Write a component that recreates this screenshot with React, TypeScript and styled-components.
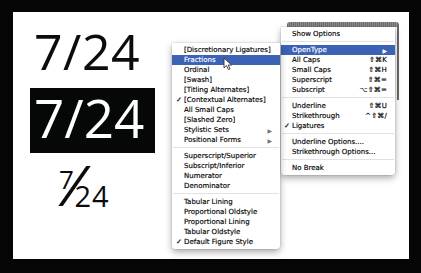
import styled, { createGlobalStyle } from "styled-components";

interface MenuEntry {
  label?: string;
  shortcut?: string;
  checked?: boolean;
  submenu?: boolean;
  active?: boolean;
  separator?: boolean;
}

const GlobalStyle = createGlobalStyle`
  html, body {
    margin: 0;
    padding: 0;
    background: #000;
  }
`;

const Frame = styled.div`
  width: 421px;
  height: 273px;
  box-sizing: border-box;
  padding: 12px 12px 14px 13px;
  background: #050505;
`;

const Canvas = styled.div`
  position: relative;
  width: 100%;
  height: 100%;
  background: #fff;
  overflow: hidden;
`;

const Figures = styled.div`
  display: flex;
  flex-direction: column;
  align-items: flex-start;
  padding: 14px 0 0 17px;
  font-family: "Open Sans", "DejaVu Sans", sans-serif;
  color: #0c0c0c;
`;

const PlainFigure = styled.div`
  font-size: 50px;
  line-height: 50px;
  margin-left: 4px;
  letter-spacing: 0.5px;
`;

const InvertedFigure = styled.div`
  margin-top: 12px;
  width: 125px;
  height: 65px;
  box-sizing: border-box;
  padding: 3px 0 0 4px;
  background: #060808;
  color: #fff;
  font-size: 53px;
  line-height: 53px;
`;

const StackedFraction = styled.div`
  display: flex;
  align-items: flex-start;
  height: 52px;
  margin: 13px 0 0 29px;
`;

const Numerator = styled.span`
  font-size: 26px;
  line-height: 26px;
`;

const FractionSlash = styled.span`
  font-size: 56px;
  line-height: 48px;
  font-weight: 500;
  margin: -6px -11px 0 -9px;
  transform: skewX(-18deg);
`;

const Denominator = styled.span`
  font-size: 29px;
  line-height: 29px;
  letter-spacing: 1px;
  margin-top: 15px;
`;

const BackPanel = styled.div`
  position: absolute;
  left: 274px;
  top: 10px;
  width: 110px;
  height: 78px;
  border-radius: 3px 3px 0 0;
  border-right: 2px solid #6a6a6a;
  background: #fafafa;
  overflow: hidden;
`;

const PanelBar = styled.div`
  height: 5px;
  background: repeating-linear-gradient(90deg, #707070 0 1px, #8c8c8c 1px 2px);
`;

const GhostText = styled.div`
  padding: 40px 0 0 56px;
  font-family: "DejaVu Sans", sans-serif;
  font-size: 7px;
  line-height: 8px;
  color: #e6e6e6;
`;

const Menu = styled.div<{ $left: number; $top: number; $width: number }>`
  position: absolute;
  left: ${({ $left }) => $left}px;
  top: ${({ $top }) => $top}px;
  width: ${({ $width }) => $width}px;
  padding: 2px 0 2px;
  background: rgba(255, 255, 255, 0.96);
  border-radius: 0 0 4px 4px;
  box-shadow: 0 3px 7px rgba(0, 0, 0, 0.35), 0 0 0 0.5px rgba(0, 0, 0, 0.12);
  font-family: "DejaVu Sans", sans-serif;
  font-size: 7px;
  color: #000;
  -webkit-text-stroke: 0.15px #000;
`;

const Row = styled.div<{ $active?: boolean; $indent: number }>`
  position: relative;
  display: flex;
  align-items: center;
  height: 10px;
  padding: 0 8px 0 ${({ $indent }) => $indent}px;
  background: ${({ $active }) => ($active ? "#3c62b6" : "transparent")};
  color: ${({ $active }) => ($active ? "#fff" : "inherit")};
  -webkit-text-stroke-color: ${({ $active }) => ($active ? "#fff" : "#000")};
  white-space: nowrap;
`;

const Check = styled.span<{ $indent: number }>`
  position: absolute;
  left: ${({ $indent }) => $indent - 8}px;
  font-size: 7px;
`;

const Label = styled.span`
  flex: 1;
`;

const Shortcut = styled.span`
  letter-spacing: 0.2px;
`;

const Arrow = styled.span<{ $active?: boolean }>`
  font-size: 6px;
  color: ${({ $active }) => ($active ? "#fff" : "#777")};
  -webkit-text-stroke: 0;
`;

const Separator = styled.div`
  height: 1px;
  margin: 2px 1px 3px;
  background: #e2e2e2;
`;

const Cursor = styled.svg`
  position: absolute;
  left: 210px;
  top: 45px;
`;

const leftItems: MenuEntry[] = [
  { label: "[Discretionary Ligatures]" },
  { label: "Fractions", active: true },
  { label: "Ordinal" },
  { label: "[Swash]" },
  { label: "[Titling Alternates]" },
  { label: "[Contextual Alternates]", checked: true },
  { label: "All Small Caps" },
  { label: "[Slashed Zero]" },
  { label: "Stylistic Sets", submenu: true },
  { label: "Positional Forms", submenu: true },
  { separator: true },
  { label: "Superscript/Superior" },
  { label: "Subscript/Inferior" },
  { label: "Numerator" },
  { label: "Denominator" },
  { separator: true },
  { label: "Tabular Lining" },
  { label: "Proportional Oldstyle" },
  { label: "Proportional Lining" },
  { label: "Tabular Oldstyle" },
  { label: "Default Figure Style", checked: true },
];

const rightItems: MenuEntry[] = [
  { label: "Show Options" },
  { separator: true },
  { label: "OpenType", submenu: true, active: true },
  { label: "All Caps", shortcut: "⇧⌘K" },
  { label: "Small Caps", shortcut: "⇧⌘H" },
  { label: "Superscript", shortcut: "⇧⌘=" },
  { label: "Subscript", shortcut: "⌥⇧⌘=" },
  { separator: true },
  { label: "Underline", shortcut: "⇧⌘U" },
  { label: "Strikethrough", shortcut: "^⇧⌘/" },
  { label: "Ligatures", checked: true },
  { separator: true },
  { label: "Underline Options...." },
  { label: "Strikethrough Options..." },
  { separator: true },
  { label: "No Break" },
];

const MenuList = ({ items, indent }: { items: MenuEntry[]; indent: number }) => (
  <>
    {items.map((item, i) =>
      item.separator ? (
        <Separator key={i} />
      ) : (
        <Row key={i} $active={item.active} $indent={indent}>
          {item.checked && <Check $indent={indent}>✓</Check>}
          <Label>{item.label}</Label>
          {item.shortcut && <Shortcut>{item.shortcut}</Shortcut>}
          {item.submenu && <Arrow $active={item.active}>▶</Arrow>}
        </Row>
      )
    )}
  </>
);

export default function App() {
  return (
    <>
      <GlobalStyle />
      <Frame>
        <Canvas>
          <Figures>
            <PlainFigure>7/24</PlainFigure>
            <InvertedFigure>7/24</InvertedFigure>
            <StackedFraction>
              <Numerator>7</Numerator>
              <FractionSlash>/</FractionSlash>
              <Denominator>24</Denominator>
            </StackedFraction>
          </Figures>

          <BackPanel>
            <PanelBar />
            <GhostText>
              T¹ T₁ Ŧ
              <br />
              T¹ T₁ Ŧ
              <br />
              Ŧ T T
            </GhostText>
          </BackPanel>

          <Menu $left={268} $top={15} $width={114}>
            <MenuList items={rightItems} indent={11} />
          </Menu>

          <Menu $left={159} $top={31} $width={108}>
            <MenuList items={leftItems} indent={12} />
          </Menu>

          <Cursor width="10" height="14" viewBox="0 0 10 14">
            <path
              d="M1 1 L1 11 L3.5 8.6 L5.4 12.6 L7 11.9 L5.2 8 L8.6 8 Z"
              fill="#fff"
              stroke="#333"
              strokeWidth="0.9"
              strokeLinejoin="round"
            />
          </Cursor>
        </Canvas>
      </Frame>
    </>
  );
}
